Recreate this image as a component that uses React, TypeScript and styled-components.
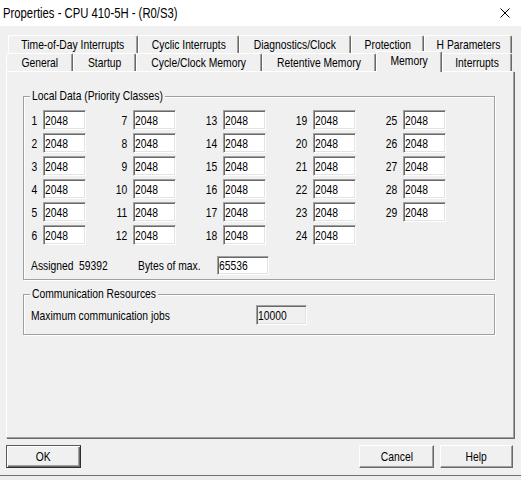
import React from "react";
import styled, { createGlobalStyle } from "styled-components";

const FONT = `"Liberation Sans", Arial, sans-serif`;

const GlobalStyle = createGlobalStyle`
  * { box-sizing: border-box; }
  html, body { margin: 0; padding: 0; }
  body {
    background: linear-gradient(#cfcfcf, #ececec) no-repeat;
    background-color: #ececec;
    font-family: ${FONT};
    font-size: 12.8px;
    color: #000;
  }
`;

/* The dialog font is a narrow face; no narrow face is installed, so the
   regular face is condensed horizontally. */
const T = styled.span<{ $o?: "left" | "center" | "right" }>`
  display: inline-block;
  white-space: nowrap;
  transform: scaleX(0.807);
  transform-origin: ${(p) => p.$o ?? "center"} center;
`;

const Window = styled.div`
  width: 521px;
  background: #f0f0f0;
  border-bottom: 1px solid #6e6e6e;
  padding-bottom: 7px;
  display: flex;
  flex-direction: column;
`;

const TitleBar = styled.div`
  height: 26px;
  background: #fff;
  display: flex;
  align-items: center;
  justify-content: space-between;
  padding: 0 11px 0 3px;
  font-size: 14px;
`;

const Content = styled.div`
  padding: 9px 7px 0 6px;
  display: flex;
  flex-direction: column;
`;

const TabRow = styled.div<{ $offset: number }>`
  height: 18px;
  display: flex;
  align-items: flex-end;
  padding-left: ${(p) => p.$offset}px;
`;

const Tab = styled.div<{ $w: number; $active?: boolean }>`
  width: ${(p) => p.$w}px;
  height: ${(p) => (p.$active ? 21 : 18)}px;
  margin-bottom: ${(p) => (p.$active ? -1 : 0)}px;
  padding-bottom: ${(p) => (p.$active ? 3 : 0)}px;
  display: flex;
  align-items: center;
  justify-content: center;
  background: #f0f0f0;
  border-top: 1px solid #fff;
  border-left: 1px solid #fff;
  border-right: 1px solid #696969;
  box-shadow: inset -1px 0 0 #a0a0a0;
  border-top-left-radius: 2px;
  border-top-right-radius: 2px;
  position: relative;
  z-index: ${(p) => (p.$active ? 2 : 1)};
`;

const Panel = styled.div`
  height: 367px;
  border-top: 1px solid #fff;
  border-left: 1px solid #fff;
  border-right: 1px solid #a0a0a0;
  border-bottom: 1px solid #a0a0a0;
  box-shadow: 1px 1px 0 #696969;
  padding: 24px 18px 0 16px;
  display: flex;
  flex-direction: column;
  gap: 14px;
`;

const GroupBox = styled.div<{ $pb: number }>`
  border: 1px solid #a0a0a0;
  box-shadow: inset 1px 1px 0 #fff, 1px 1px 0 #fff;
  display: flex;
  flex-direction: column;
  align-items: flex-start;
  padding-bottom: ${(p) => p.$pb}px;
`;

const GroupTitle = styled.div<{ $w: number }>`
  width: ${(p) => p.$w}px;
  margin: -8px 0 0 6px;
  padding: 0 2px;
  line-height: 14px;
  background: #f0f0f0;
`;

const DataGrid = styled.div`
  margin: 7px 0 0 6px;
  display: grid;
  grid-template-columns: 13px 43px repeat(4, 47px 43px);
  grid-template-rows: repeat(6, 20px);
  row-gap: 3px;
`;

const NumLabel = styled.div`
  display: flex;
  align-items: center;
  justify-content: flex-end;
  padding-right: 6px;
`;

const Field = styled.div<{ $w: number; $h?: number; $disabled?: boolean }>`
  width: ${(p) => p.$w}px;
  height: ${(p) => p.$h ?? 20}px;
  padding: 0 0 0 1px;
  display: flex;
  align-items: center;
  background: ${(p) => (p.$disabled ? "#f0f0f0" : "#fff")};
  border: 1px solid;
  border-color: #a0a0a0 #fff #fff #a0a0a0;
  box-shadow: inset 1px 1px 0 #696969, inset -1px -1px 0 #e3e3e3;
`;

const InfoRow = styled.div<{ $mt: number }>`
  margin: ${(p) => p.$mt}px 0 0 7px;
  display: flex;
  align-items: center;
`;

const InfoText = styled.div<{ $w: number }>`
  width: ${(p) => p.$w}px;
`;

const Footer = styled.div`
  margin-top: 7px;
  padding: 0 8px 0 6px;
  display: flex;
  justify-content: space-between;
`;

const ButtonGroup = styled.div`
  display: flex;
  gap: 6px;
`;

const Button = styled.button<{ $default?: boolean; $w: number }>`
  width: ${(p) => p.$w}px;
  height: 23px;
  margin: 0;
  padding: 0;
  font-family: ${FONT};
  font-size: 12.8px;
  color: #000;
  background: #f0f0f0;
  border: 1px solid;
  border-color: ${(p) =>
    p.$default ? "#5a5a5a #2e2e2e #2e2e2e #5a5a5a" : "#fff #696969 #696969 #fff"};
  box-shadow: ${(p) =>
    p.$default
      ? "inset 1px 1px 0 #fff, inset -1px -1px 0 #696969, inset -2px -2px 0 #a0a0a0"
      : "inset -1px -1px 0 #a0a0a0"};
`;

const CloseIcon = () => (
  <svg width="10" height="10" viewBox="0 0 10 10">
    <path d="M0.5 0.5 L9.5 9.5 M9.5 0.5 L0.5 9.5" stroke="#000" strokeWidth="1" fill="none" />
  </svg>
);

const row1 = [
  { t: "Time-of-Day Interrupts", w: 130 },
  { t: "Cyclic Interrupts", w: 101 },
  { t: "Diagnostics/Clock", w: 112 },
  { t: "Protection", w: 73 },
  { t: "H Parameters", w: 88 },
];

const row2 = [
  { t: "General", w: 67 },
  { t: "Startup", w: 63 },
  { t: "Cycle/Clock Memory", w: 126 },
  { t: "Retentive Memory", w: 114 },
  { t: "Memory", w: 66, active: true },
  { t: "Interrupts", w: 70 },
];

export default function App() {
  const cells: React.ReactNode[] = [];
  for (let r = 0; r < 6; r++) {
    for (let c = 0; c < 5; c++) {
      const n = c * 6 + r + 1;
      if (n <= 29) {
        cells.push(
          <NumLabel key={`l${n}`}>
            <T $o="right">{n}</T>
          </NumLabel>
        );
        cells.push(
          <Field key={`f${n}`} $w={43}>
            <T $o="left">2048</T>
          </Field>
        );
      } else {
        cells.push(<div key={`el${r}${c}`} />);
        cells.push(<div key={`ef${r}${c}`} />);
      }
    }
  }

  return (
    <>
      <GlobalStyle />
      <Window>
        <TitleBar>
          <T $o="left">Properties - CPU 410-5H - (R0/S3)</T>
          <CloseIcon />
        </TitleBar>
        <Content>
          <TabRow $offset={2}>
            {row1.map((t) => (
              <Tab key={t.t} $w={t.w}>
                <T>{t.t}</T>
              </Tab>
            ))}
          </TabRow>
          <TabRow $offset={0}>
            {row2.map((t) => (
              <Tab key={t.t} $w={t.w} $active={t.active}>
                <T>{t.t}</T>
              </Tab>
            ))}
          </TabRow>
          <Panel>
            <GroupBox $pb={4}>
              <GroupTitle $w={135}>
                <T $o="left">Local Data (Priority Classes)</T>
              </GroupTitle>
              <DataGrid>{cells}</DataGrid>
              <InfoRow $mt={11}>
                <InfoText $w={48}>
                  <T $o="left">Assigned</T>
                </InfoText>
                <InfoText $w={59}>
                  <T $o="left">59392</T>
                </InfoText>
                <InfoText $w={79}>
                  <T $o="left">Bytes of max.</T>
                </InfoText>
                <Field $w={52} $h={19}>
                  <T $o="left">65536</T>
                </Field>
              </InfoRow>
            </GroupBox>
            <GroupBox $pb={9}>
              <GroupTitle $w={128}>
                <T $o="left">Communication Resources</T>
              </GroupTitle>
              <InfoRow $mt={4}>
                <InfoText $w={225}>
                  <T $o="left">Maximum communication jobs</T>
                </InfoText>
                <Field $w={51} $disabled>
                  <T $o="left">10000</T>
                </Field>
              </InfoRow>
            </GroupBox>
          </Panel>
        </Content>
        <Footer>
          <Button $default $w={75}>
            <T>OK</T>
          </Button>
          <ButtonGroup>
            <Button $w={75}>
              <T>Cancel</T>
            </Button>
            <Button $w={73}>
              <T>Help</T>
            </Button>
          </ButtonGroup>
        </Footer>
      </Window>
    </>
  );
}
